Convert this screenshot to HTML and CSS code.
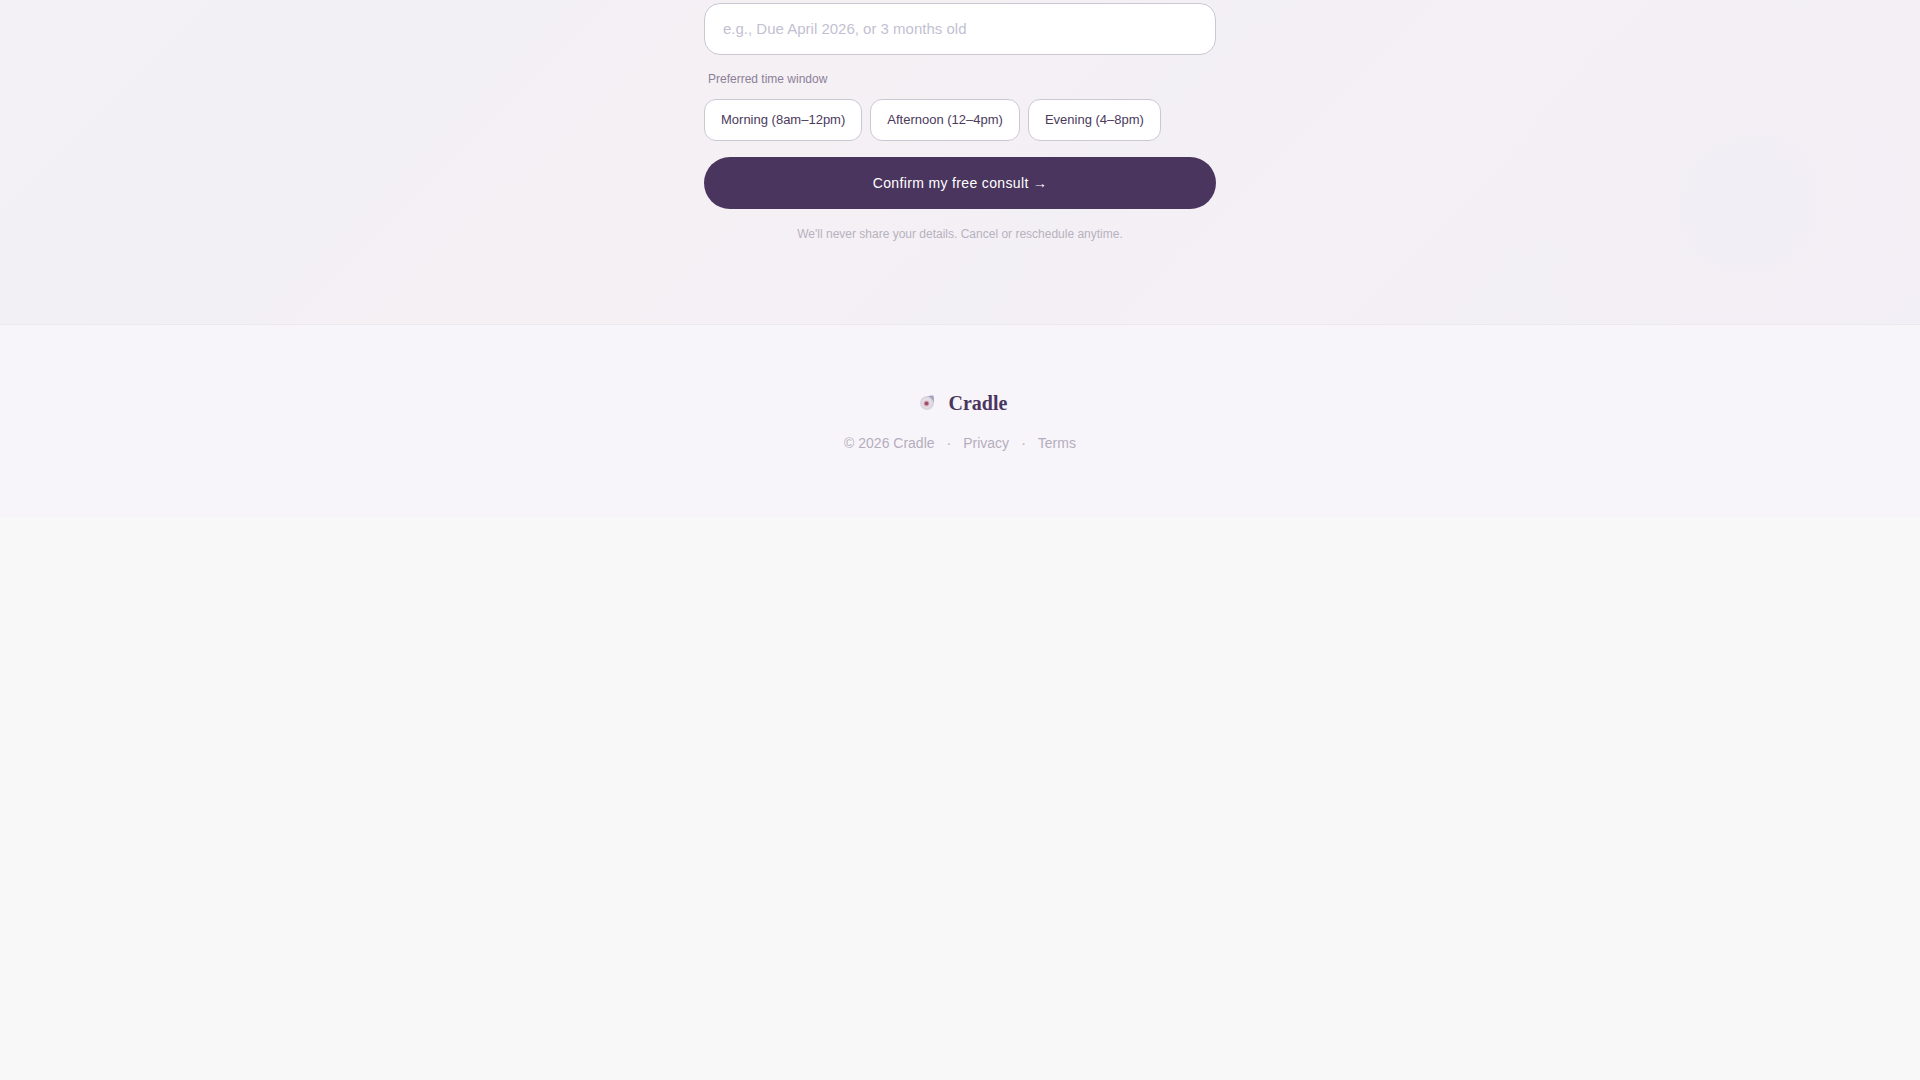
FILE: index.html
```html
<!DOCTYPE html>
<html lang="en">
<head>
    <meta charset="UTF-8">
    <meta name="viewport" content="width=device-width, initial-scale=1.0">
    <title>Cradle</title>
    <link rel="stylesheet" href="styles.css">
</head>
<body>
    <main class="booking">
        <form class="booking-form">
            <input class="text-field" type="text" aria-label="Due date or baby's age" placeholder="e.g., Due April 2026, or 3 months old">

            <p class="field-label" id="time-label">Preferred time window</p>
            <div class="time-options" role="group" aria-labelledby="time-label">
                <button class="time-option" type="button">Morning (8am–12pm)</button>
                <button class="time-option" type="button">Afternoon (12–4pm)</button>
                <button class="time-option" type="button">Evening (4–8pm)</button>
            </div>

            <button class="submit-btn" type="submit">Confirm my free consult →</button>
            <p class="form-note">We'll never share your details. Cancel or reschedule anytime.</p>
        </form>
    </main>

    <footer class="footer">
        <div class="brand">
            <svg class="brand-logo" viewBox="0 0 28 28" aria-hidden="true">
                <circle cx="14" cy="14" r="7" fill="#d8d5e2"/>
                <path d="M14 7c3 0 6-1 6.500 0 .5 1 .5 4 .5 7-1-3-3-6-7-7z" fill="#a3a3c0"/>
                <circle cx="13.500" cy="14" r="5" fill="#e8dde4"/>
                <circle cx="13.500" cy="14.500" r="3" fill="#dab5be"/>
                <circle cx="13.500" cy="14.500" r="2" fill="#a0506a"/>
            </svg>
            <span class="brand-name">Cradle</span>
        </div>
        <div class="footer-links">
            <span>© 2026 Cradle</span>
            <span>·</span>
            <a href="#">Privacy</a>
            <span>·</span>
            <a href="#">Terms</a>
        </div>
    </footer>
</body>
</html>
```
FILE: styles.css
```css
* {
    box-sizing: border-box;
}

body {
    margin: 0;
    font-family: "Liberation Sans", Arial, sans-serif;
    background-color: #f8f8f8;
    color: #4a355e;
}

p {
    margin: 0;
}

.booking {
    padding: 3px 24px 81px;
    background:
        radial-gradient(circle at 91% 62%, rgba(240, 236, 244, 0.6), rgba(240, 236, 244, 0) 240px),
        linear-gradient(135deg, #f3f1f6 0%, #f2f0f5 22%, #f5f0f4 32%, #f5f0f4 42%, #f3f0f5 56%, #f4f0f5 70%, #f3f0f5 80%, #f3eff6 100%);
}

.booking-form {
    display: flex;
    flex-direction: column;
    max-width: 512px;
    margin: 0 auto;
}

.text-field {
    height: 52px;
    padding: 0 18px 2px;
    border: 1px solid #cbc7d3;
    border-radius: 16px;
    background-color: white;
    font: inherit;
    font-size: 15px;
    color: #4a355e;
}

.text-field::placeholder {
    color: #c3bfd2;
    opacity: 1;
}

.field-label {
    margin: 16px 0 12px;
    padding-left: 4px;
    font-size: 12px;
    line-height: 16px;
    color: #8b8098;
}

.time-options {
    display: flex;
    flex-wrap: wrap;
    gap: 8px;
}

.time-option {
    height: 42px;
    padding: 0 16px 2px;
    border: 1px solid #cbc7d3;
    border-radius: 12px;
    background-color: white;
    font: inherit;
    font-size: 13px;
    color: #4a3a5c;
    cursor: pointer;
}

.submit-btn {
    height: 52px;
    margin-top: 16px;
    border: none;
    border-radius: 26px;
    background-color: #4a355e;
    font: inherit;
    font-size: 14px;
    letter-spacing: 0.025em;
    color: white;
    cursor: pointer;
}

.form-note {
    margin-top: 16px;
    font-size: 12px;
    line-height: 18px;
    text-align: center;
    color: #b8b1c0;
}

.footer {
    padding: 64px 24px;
    border-top: 1px solid #ebe8ef;
    background-color: #f7f5fa;
}

.brand {
    display: flex;
    align-items: center;
    justify-content: center;
    gap: 8px;
    margin-bottom: 16px;
}

.brand-logo {
    width: 28px;
    height: 28px;
}

.brand-name {
    font-family: "Liberation Serif", "Times New Roman", serif;
    font-size: 20px;
    font-weight: bold;
    line-height: 28px;
}

.footer-links {
    display: flex;
    justify-content: center;
    gap: 12px;
    font-size: 14px;
    line-height: 20px;
    color: #b4adbd;
}

.footer-links a {
    color: inherit;
    text-decoration: none;
}
```
